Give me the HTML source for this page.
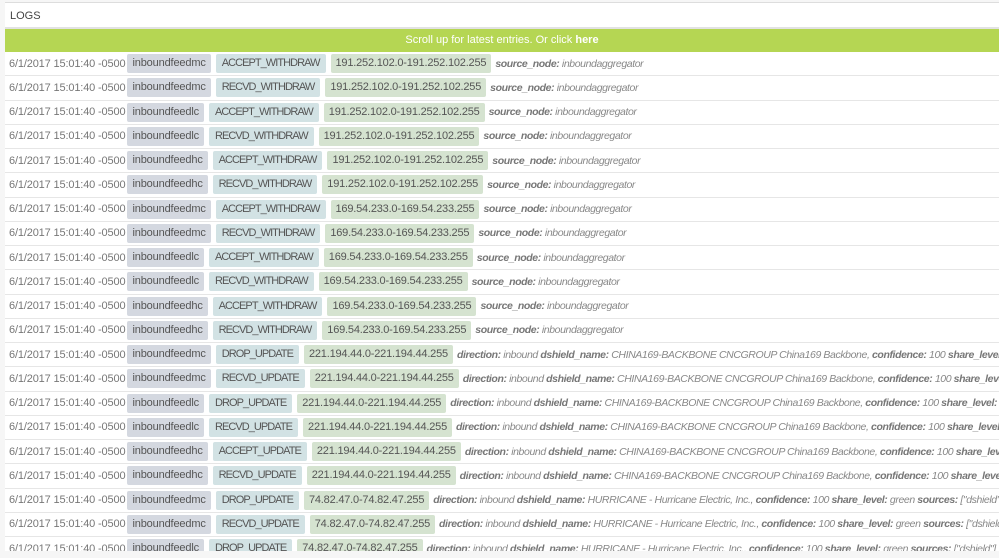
<!DOCTYPE html><html><head><style>
*{box-sizing:border-box;margin:0;padding:0}
body{width:999px;height:558px;overflow:hidden;background:#f6f6f6;font-family:"Liberation Sans",sans-serif;font-size:11px;color:#666}
.top{position:absolute;left:5px;top:2px;width:994px;height:27px;background:#fff;border-top:1px solid #ddd;border-bottom:2px solid #e2e2e2}
.top span{position:absolute;left:5px;top:7px;font-size:11px;color:#444}
.bar{position:absolute;left:5px;top:29px;width:994px;height:23px;background:#b5d653;color:#fff;text-align:center;line-height:23px;font-size:11px}
.rows{position:absolute;left:5px;top:52px;width:994px;height:499px;overflow:hidden;background:#fff}
.r{height:24.25px;border-bottom:1px solid #e6e6e6;white-space:nowrap;overflow:hidden;padding-left:4px;display:flex;align-items:center}
.t{color:#777;margin-right:2px;letter-spacing:-0.15px}
.b{display:inline-block;height:19px;line-height:19px;padding:0 5px;border-radius:2px;color:#555;margin-right:5px}
.b1{background:#d4d8e0;letter-spacing:-0.15px}.b2{background:#d2e2e4;letter-spacing:-0.95px;padding:0 6px}.b3{background:#d5e3d0;margin-right:4px;letter-spacing:-0.2px}
.i{font-style:italic;color:#888;font-size:10.5px;letter-spacing:-0.4px}.i b{color:#777}
</style></head><body>
<div class="top"><span>LOGS</span></div>
<div class="bar">Scroll up for latest entries. Or click <b>here</b></div>
<div class="rows">
<script>
var rows=[
["inboundfeedmc","ACCEPT_WITHDRAW","191.252.102.0-191.252.102.255",0],
["inboundfeedmc","RECVD_WITHDRAW","191.252.102.0-191.252.102.255",0],
["inboundfeedlc","ACCEPT_WITHDRAW","191.252.102.0-191.252.102.255",0],
["inboundfeedlc","RECVD_WITHDRAW","191.252.102.0-191.252.102.255",0],
["inboundfeedhc","ACCEPT_WITHDRAW","191.252.102.0-191.252.102.255",0],
["inboundfeedhc","RECVD_WITHDRAW","191.252.102.0-191.252.102.255",0],
["inboundfeedmc","ACCEPT_WITHDRAW","169.54.233.0-169.54.233.255",0],
["inboundfeedmc","RECVD_WITHDRAW","169.54.233.0-169.54.233.255",0],
["inboundfeedlc","ACCEPT_WITHDRAW","169.54.233.0-169.54.233.255",0],
["inboundfeedlc","RECVD_WITHDRAW","169.54.233.0-169.54.233.255",0],
["inboundfeedhc","ACCEPT_WITHDRAW","169.54.233.0-169.54.233.255",0],
["inboundfeedhc","RECVD_WITHDRAW","169.54.233.0-169.54.233.255",0],
["inboundfeedmc","DROP_UPDATE","221.194.44.0-221.194.44.255",1],
["inboundfeedmc","RECVD_UPDATE","221.194.44.0-221.194.44.255",1],
["inboundfeedlc","DROP_UPDATE","221.194.44.0-221.194.44.255",1],
["inboundfeedlc","RECVD_UPDATE","221.194.44.0-221.194.44.255",1],
["inboundfeedhc","ACCEPT_UPDATE","221.194.44.0-221.194.44.255",1],
["inboundfeedhc","RECVD_UPDATE","221.194.44.0-221.194.44.255",1],
["inboundfeedmc","DROP_UPDATE","74.82.47.0-74.82.47.255",2],
["inboundfeedmc","RECVD_UPDATE","74.82.47.0-74.82.47.255",2],
["inboundfeedlc","DROP_UPDATE","74.82.47.0-74.82.47.255",2]];
var tails=['<b>source_node:</b> inboundaggregator',
'<b>direction:</b> inbound <b>dshield_name:</b> CHINA169-BACKBONE CNCGROUP China169 Backbone, <b>confidence:</b> 100 <b>share_level:</b> green',
'<b>direction:</b> inbound <b>dshield_name:</b> HURRICANE - Hurricane Electric, Inc., <b>confidence:</b> 100 <b>share_level:</b> green <b>sources:</b> ["dshield"]'];
rows.forEach(function(r){document.write('<div class="r"><span class="t">6/1/2017 15:01:40 -0500</span><span class="b b1">'+r[0]+'</span><span class="b b2">'+r[1]+'</span><span class="b b3">'+r[2]+'</span><span class="i">'+tails[r[3]]+'</span></div>')});
</script>
</div>
</body></html>
